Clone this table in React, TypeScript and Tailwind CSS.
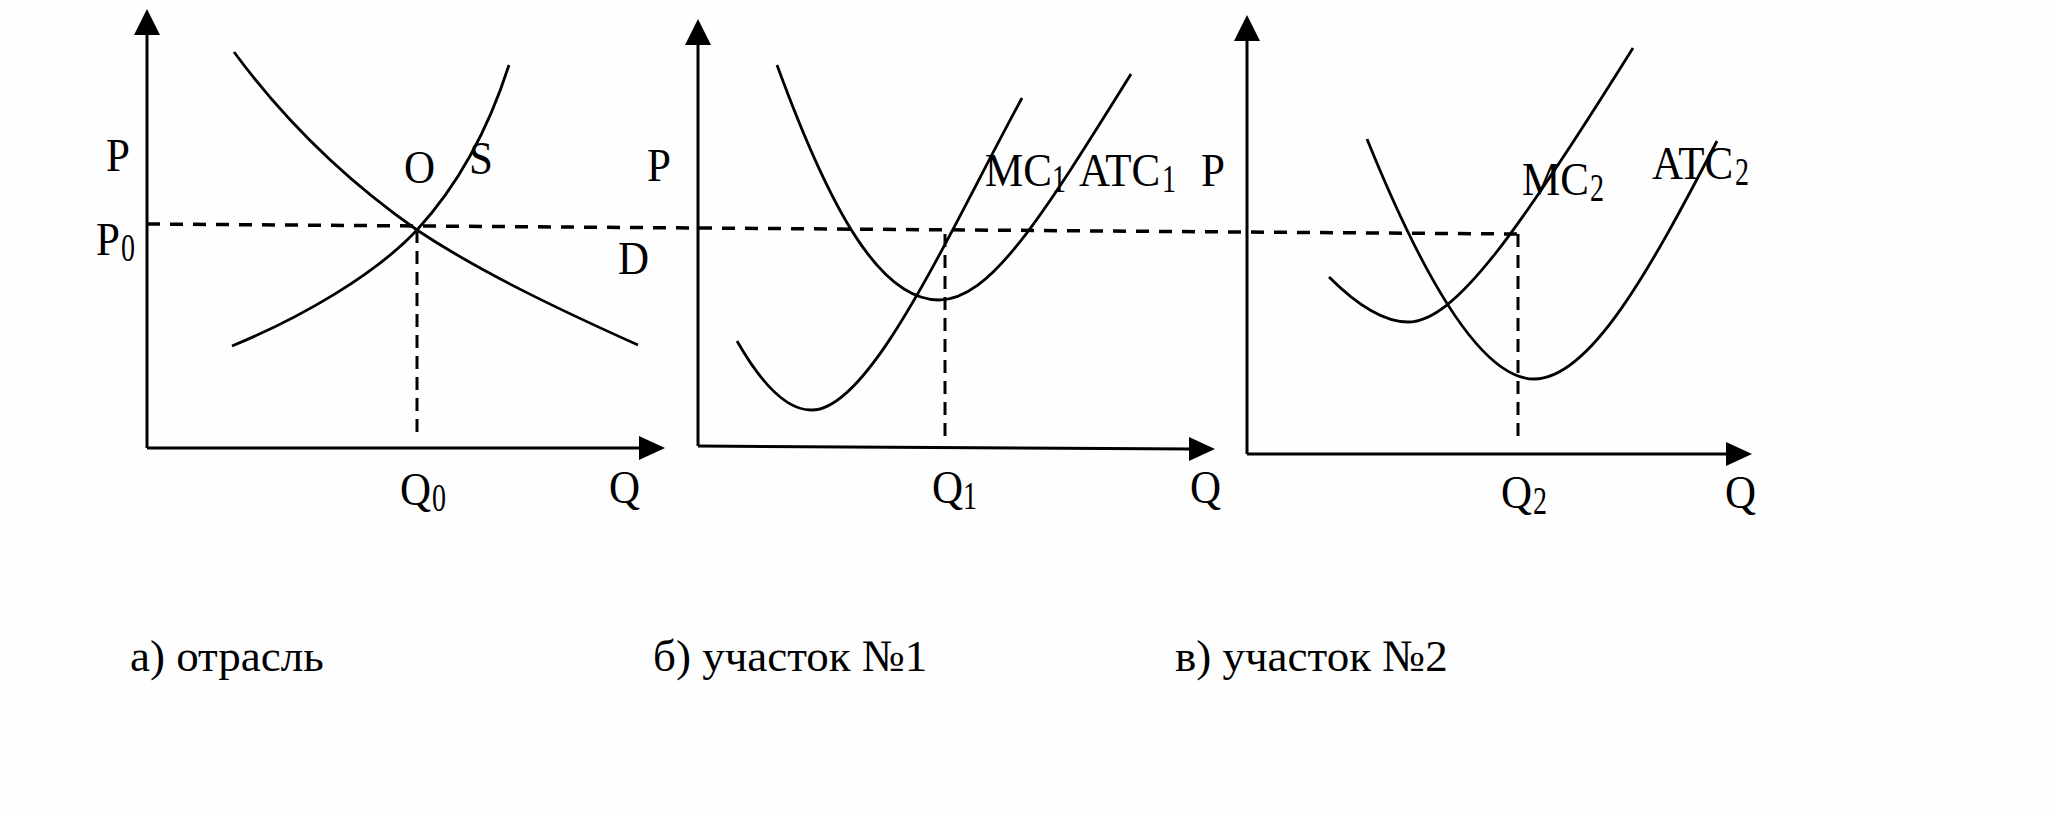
type Axis = { x: number; yTop: number; y0: number; y1: number; xEnd: number };

const axes: Axis[] = [
  { x: 147, yTop: 9, y0: 448, y1: 448, xEnd: 665 },
  { x: 698, yTop: 19, y0: 446, y1: 449, xEnd: 1215 },
  { x: 1247, yTop: 15, y0: 454, y1: 454, xEnd: 1752 },
];

// hand-fitted cubic curves
const curves = [
  // a) demand D and supply S
  "M234 52 C290 128 357 188 417 230 C480 272 560 310 638 345",
  "M232 346 C300 318 375 275 417 230 C450 194 485 140 509 65",
  // б) ATC1 and MC1
  "M777 65 C830 210 880 300 939 300 C990 300 1040 220 1131 74",
  "M737 341 C765 390 790 410 811 410 C870 412 950 230 1022 98",
  // в) MC2 and ATC2
  "M1329 277 C1360 308 1385 322 1408 322 C1455 322 1518 232 1633 48",
  "M1367 139 C1420 270 1480 379 1534 379 C1590 379 1650 270 1717 141",
];

const dropLines = [
  { x: 417, y1: 230, y2: 436 },
  { x: 945, y1: 234, y2: 437 },
  { x: 1518, y1: 234, y2: 441 },
];

const FS = 43;
const widths: Record<string, number> = { P: 0.556, Q: 0.722, M: 0.889, C: 0.667, A: 0.722, T: 0.611, O: 0.722, S: 0.556, D: 0.722 };

function Label({ x, y, text, sub }: { x: number; y: number; text: string; sub?: string }) {
  const w = text.split("").reduce((s, ch) => s + (widths[ch] ?? 0.6), 0) * FS;
  // "AT" is kerned, so ATC runs a little shorter than the sum of widths
  const sx = x + w + (text.startsWith("AT") ? -3 : sub === "1" ? 0 : 1);
  return (
    <g>
      <text transform={`translate(${x} ${y}) scale(1 1.1)`} fontSize={FS}>
        {text}
      </text>
      {sub && (
        <text transform={`translate(${sx} ${y + 6}) scale(1 1.4)`} fontSize={28}>
          {sub}
        </text>
      )}
    </g>
  );
}

export default function App() {
  return (
    <div className="w-[2054px] h-[813px] bg-[#fefefe] overflow-hidden flex flex-col text-black font-['Liberation_Serif',serif]">
      <svg width={2054} height={634} viewBox="0 0 2054 634" className="shrink-0">
        {axes.map((a, i) => (
          <g key={i}>
            <line x1={a.x} y1={a.y0} x2={a.x} y2={a.yTop + 22} stroke="black" strokeWidth={3} />
            <polygon points={`${a.x},${a.yTop} ${a.x - 13},${a.yTop + 26} ${a.x + 13},${a.yTop + 26}`} fill="black" />
            <line x1={a.x} y1={a.y0} x2={a.xEnd - 22} y2={a.y1} stroke="black" strokeWidth={3} />
            <polygon
              points={`${a.xEnd},${a.y1} ${a.xEnd - 26},${a.y1 - 12} ${a.xEnd - 26},${a.y1 + 12}`}
              fill="black"
            />
          </g>
        ))}

        {/* price line P0 carried across all three panels */}
        <line x1={147} y1={224} x2={1518} y2={234} stroke="black" strokeWidth={3.5} strokeDasharray="13 10" />
        {dropLines.map((l, i) => (
          <line key={i} x1={l.x} y1={l.y1} x2={l.x} y2={l.y2} stroke="black" strokeWidth={3} strokeDasharray="13 8" />
        ))}

        {curves.map((d, i) => (
          <path key={i} d={d} fill="none" stroke="black" strokeWidth={2.8} />
        ))}

        <g fill="black">
          <Label x={106} y={171} text="P" />
          <Label x={404} y={183} text="O" />
          <Label x={469} y={174} text="S" />
          <Label x={96} y={255} text="P" sub="0" />
          <Label x={618} y={274} text="D" />
          <Label x={400} y={505} text="Q" sub="0" />
          <Label x={609} y={503} text="Q" />

          <Label x={647} y={181} text="P" />
          <Label x={985} y={186} text="MC" sub="1" />
          <Label x={1079} y={186} text="ATC" sub="1" />
          <Label x={932} y={503} text="Q" sub="1" />
          <Label x={1190} y={503} text="Q" />

          <Label x={1201} y={186} text="P" />
          <Label x={1522} y={195} text="MC" sub="2" />
          <Label x={1652} y={179} text="ATC" sub="2" />
          <Label x={1501} y={508} text="Q" sub="2" />
          <Label x={1725} y={508} text="Q" />
        </g>
      </svg>

      <div className="flex items-baseline pl-[130px] text-[45px] leading-none">
        <div className="w-[523px]">а) отрасль</div>
        <div className="w-[522px]">б) участок №1</div>
        <div>в) участок №2</div>
      </div>
    </div>
  );
}
